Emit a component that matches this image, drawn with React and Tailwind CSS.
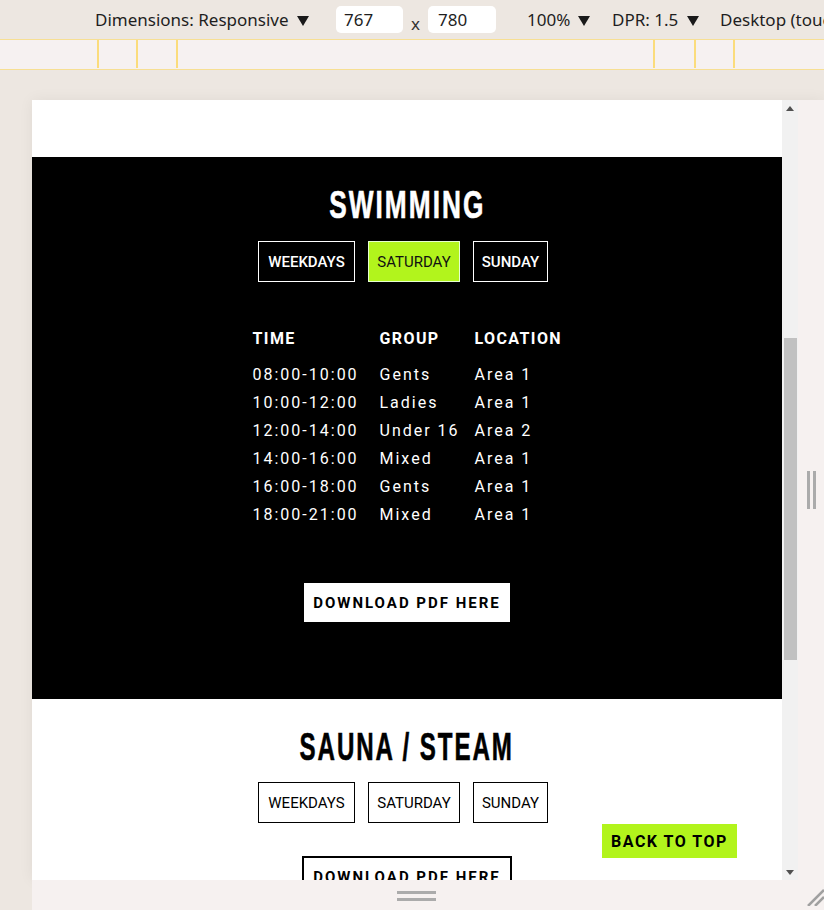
import React from "react";

const LIME = "bg-[#b2f41c]";

function Tabs({ dark, className = "" }) {
  const items = [
    { label: "WEEKDAYS", w: "w-[97px]" },
    { label: "SATURDAY", w: "w-[92px]" },
    { label: "SUNDAY", w: "w-[75px]" },
  ];
  return (
    <div className={"flex gap-[13px] mr-[8px] " + className}>
      {items.map((it) => {
        const active = dark && it.label === "SATURDAY";
        let cls;
        if (active) cls = "bg-[#b2f41c] border-[#e6ffd0] text-[#111] font-normal";
        else if (dark) cls = "border-white text-white font-medium";
        else cls = "border-black text-black font-normal";
        return (
          <div
            key={it.label}
            className={
              "h-[41px] flex items-center justify-center border text-[15px] pt-[2px] " +
              it.w +
              " " +
              cls
            }
          >
            {it.label}
          </div>
        );
      })}
    </div>
  );
}

function Heading({ children, dark, scale }) {
  return (
    <h2
      className={
        "font-['Liberation_Sans',Arial,sans-serif] font-bold text-[38px] leading-none tracking-[3px] [-webkit-text-stroke:0.6px_currentColor] " +
        scale +
        " " +
        (dark ? "text-white" : "text-black")
      }
    >
      {children}
    </h2>
  );
}

const rows = [
  ["08:00-10:00", "Gents", "Area 1"],
  ["10:00-12:00", "Ladies", "Area 1"],
  ["12:00-14:00", "Under 16", "Area 2"],
  ["14:00-16:00", "Mixed", "Area 1"],
  ["16:00-18:00", "Gents", "Area 1"],
  ["18:00-21:00", "Mixed", "Area 1"],
];

function Schedule() {
  return (
    <div className="mt-[42px] grid grid-cols-[127px_95px_87px] text-white">
      {["TIME", "GROUP", "LOCATION"].map((h) => (
        <div
          key={h}
          className="h-[28px] mb-[8px] flex items-center pt-[2px] text-[16px] font-bold tracking-[1.4px] whitespace-nowrap"
        >
          {h}
        </div>
      ))}
      {rows.map((r, i) =>
        r.map((c, j) => (
          <div
            key={i + "-" + j}
            className="h-[28px] flex items-center pt-[2px] text-[16px] tracking-[2px] whitespace-nowrap"
          >
            {c}
          </div>
        ))
      )}
    </div>
  );
}

function Frame() {
  return (
    <div className="relative w-[750px] h-[780px] overflow-hidden bg-white font-['Roboto',sans-serif]">
      <div className="h-[57px]" />
      <section className="h-[542px] bg-black flex flex-col items-center">
        <div className="mt-[29px]">
          <Heading dark scale="scale-x-[0.69]">SWIMMING</Heading>
        </div>
        <Tabs dark className="mt-[17px]" />
        <Schedule />
        <button className="mt-[55px] h-[39px] px-[9px] pt-[1px] bg-white text-black text-[15px] font-bold tracking-[2px]">
          DOWNLOAD PDF HERE
        </button>
      </section>
      <section className="flex flex-col items-center">
        <div className="mt-[29px]">
          <Heading scale="scale-x-[0.635]">SAUNA / STEAM</Heading>
        </div>
        <Tabs className="mt-[16px]" />
        <button className="mt-[33px] h-[43px] px-[9px] border-2 border-black bg-white text-black text-[15px] font-bold tracking-[2px]">
          DOWNLOAD PDF HERE
        </button>
      </section>
      <a
        className={
          "absolute left-[570px] top-[724px] h-[34px] w-[135px] flex items-center justify-center pt-[1px] text-[16px] font-bold tracking-[1.5px] text-black " +
          LIME
        }
      >
        BACK TO TOP
      </a>
    </div>
  );
}

function Scrollbar() {
  return (
    <div className="w-[16px] h-[780px] bg-[#f1f1f1] flex flex-col items-center">
      <div className="h-[16px] flex items-center justify-center">
        <svg width="8" height="5" viewBox="0 0 8 5">
          <path d="M0 5 L4 0 L8 5 Z" fill="#505050" />
        </svg>
      </div>
      <div className="mt-[222px] w-[13px] h-[322px] bg-[#c1c1c1] ml-[1px]" />
      <div className="flex-1" />
      <div className="h-[16px] flex items-center justify-center">
        <svg width="8" height="5" viewBox="0 0 8 5">
          <path d="M0 0 L4 5 L8 0 Z" fill="#505050" />
        </svg>
      </div>
    </div>
  );
}

function Caret() {
  return (
    <svg width="12" height="10" viewBox="0 0 12 10" className="mt-[2px]">
      <path d="M0 0 L12 0 L6 10 Z" fill="#1a1a1a" />
    </svg>
  );
}

function Toolbar() {
  return (
    <div className="h-[39px] flex items-center bg-[#ede7e1] text-[17px] text-[#1e1e1e] font-['Noto_Sans',sans-serif] whitespace-nowrap overflow-hidden">
      <div className="w-[95px] shrink-0" />
      <div className="w-[241px] shrink-0 flex items-center gap-[8px]">
        <span>Dimensions: Responsive</span>
        <Caret />
      </div>
      <div className="w-[67px] h-[27px] shrink-0 bg-white rounded-[5px] flex items-center pl-[8px]">
        767
      </div>
      <div className="w-[25px] shrink-0 flex justify-center pt-[8px] text-[17px] text-[#333]">x</div>
      <div className="w-[68px] h-[27px] shrink-0 bg-white rounded-[5px] flex items-center pl-[10px]">
        780
      </div>
      <div className="w-[31px] shrink-0" />
      <div className="w-[85px] shrink-0 flex items-center gap-[8px]">
        <span>100%</span>
        <Caret />
      </div>
      <div className="w-[108px] shrink-0 flex items-center gap-[9px]">
        <span>DPR: 1.5</span>
        <Caret />
      </div>
      <span>Desktop (touch)</span>
    </div>
  );
}

function Ruler() {
  const marks = [98, 137, 177, 654, 695, 734];
  return (
    <div className="relative h-[31px] bg-[#f6f1f1] border-y border-[#f7df93]">
      {marks.map((x) => (
        <div
          key={x}
          className="absolute top-0 h-[28px] w-[2px] bg-[#fbdc7c]"
          style={{ left: x - 1 }}
        />
      ))}
    </div>
  );
}

export default function App() {
  return (
    <div className="w-[824px] h-[910px] overflow-hidden bg-[#ede7e1]">
      <Toolbar />
      <Ruler />
      <div className="flex pl-[32px] pt-[30px]">
        <div className="flex flex-col">
          <div className="flex h-[780px] shadow-[0_0_14px_rgba(0,0,0,0.06)]">
            <Frame />
            <Scrollbar />
            <div className="w-[26px] h-[780px] bg-[#f6f1f0] flex items-center justify-center gap-[3px]">
              <div className="w-[3px] h-[38px] bg-[#ababab]" />
              <div className="w-[3px] h-[38px] bg-[#ababab]" />
            </div>
          </div>
          <div className="relative w-[792px] h-[30px] bg-[#f6f1f0] flex flex-col items-center pt-[11px] gap-[4px]">
            <div className="ml-[-24px] w-[39px] h-[3px] bg-[#ababab]" />
            <div className="ml-[-24px] w-[39px] h-[3px] bg-[#ababab]" />
            <svg className="absolute right-0 bottom-[4px]" width="20" height="20" viewBox="0 0 20 20">
              <path d="M4 20 L20 4" stroke="#a0a0a0" strokeWidth="2.5" />
              <path d="M11 20 L20 11" stroke="#a0a0a0" strokeWidth="2.5" />
            </svg>
          </div>
        </div>
      </div>
    </div>
  );
}
